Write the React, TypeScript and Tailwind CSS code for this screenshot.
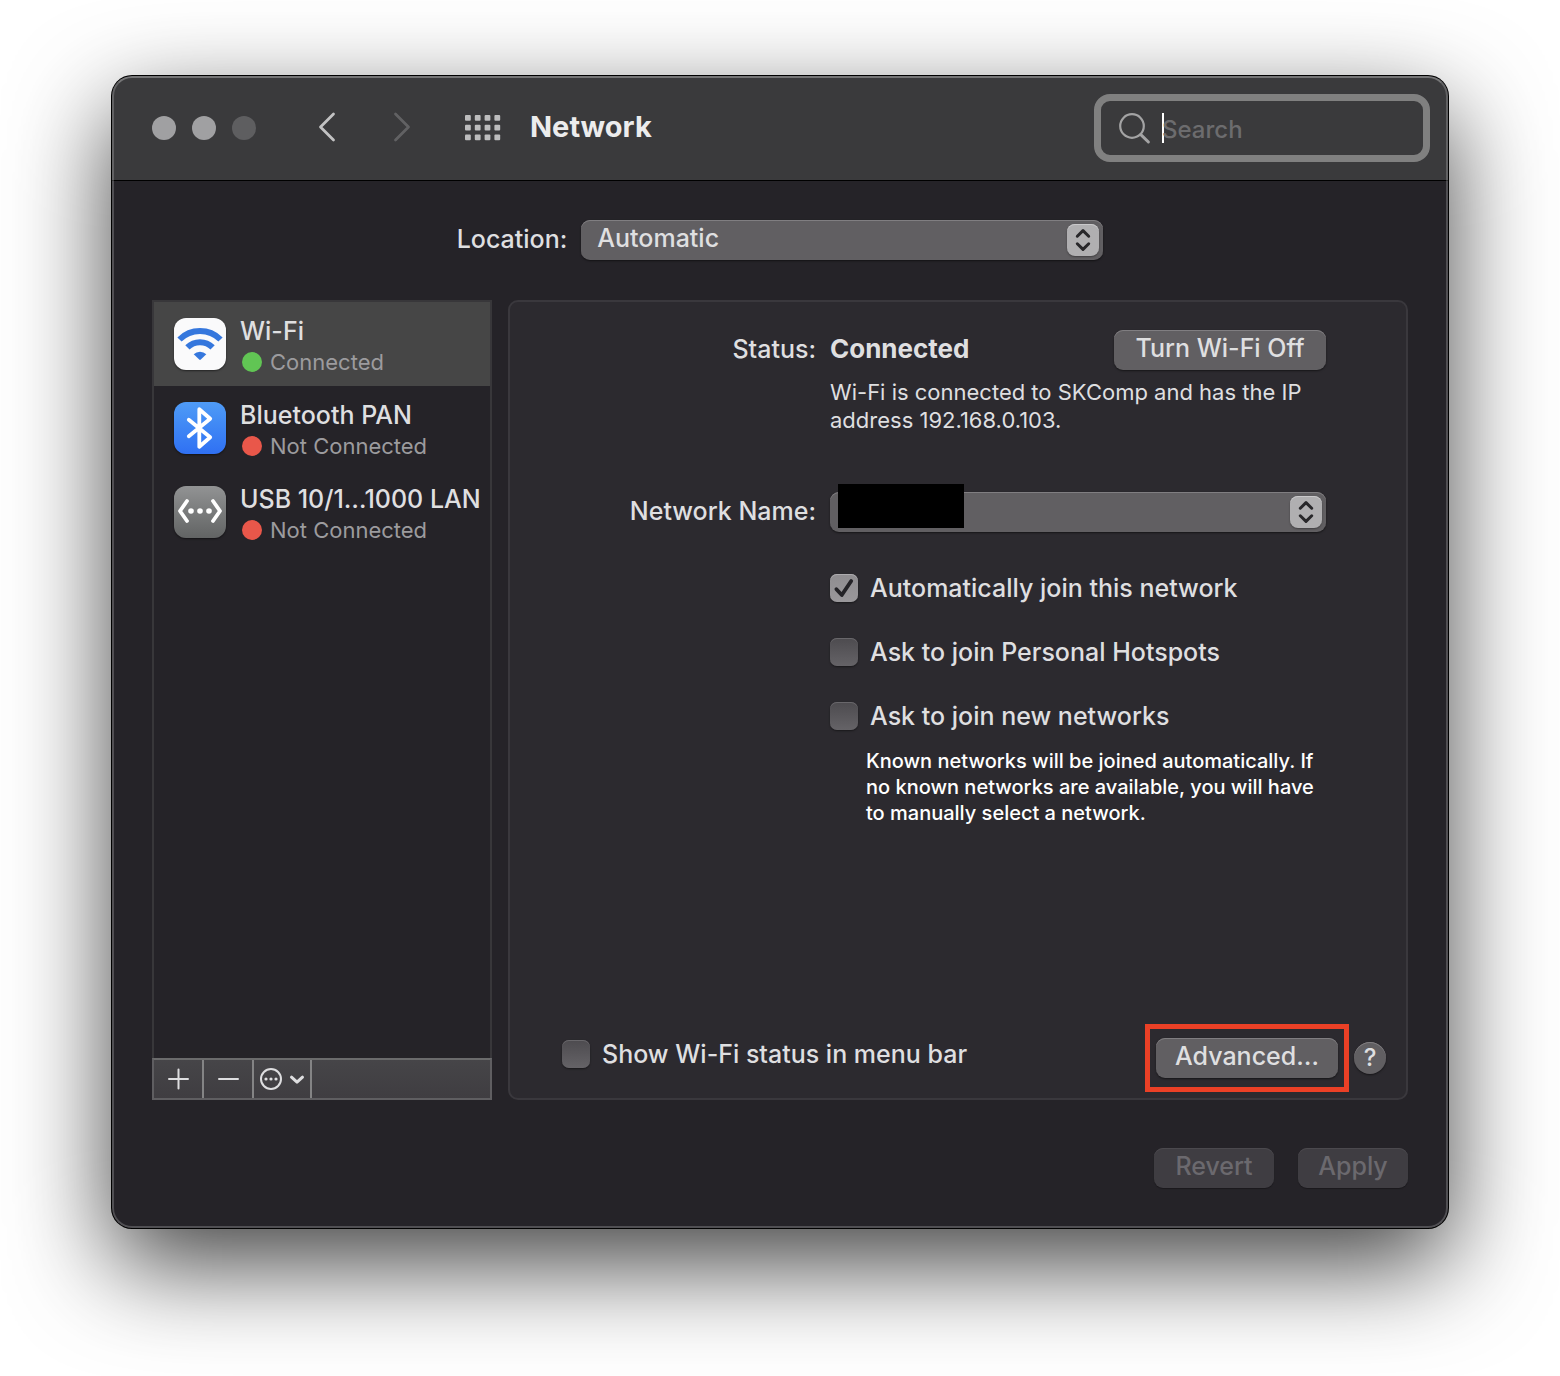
import { useState, type ReactNode } from 'react';

const textStroke = '#dedee0';

function WifiIcon() {
  return (
    <svg viewBox="0 0 52 52" className="h-full w-full" fill="none" stroke="#3577dd" strokeWidth="6" aria-hidden="true">
      <path d="M5.5 21.5A29 29 0 0 1 46.5 21.5" />
      <path d="M13.4 29.4A17.8 17.8 0 0 1 38.6 29.4" />
      <path d="M19.7 36.3A9 9 0 0 1 32.3 36.3L26.8 41.6Q26 42.3 25.2 41.6Z" fill="#3577dd" stroke="none" />
    </svg>
  );
}

function BluetoothIcon() {
  return (
    <svg viewBox="0 0 52 52" className="h-full w-full" fill="none" stroke="#fff" strokeWidth="3.8" strokeLinecap="round" strokeLinejoin="round" aria-hidden="true">
      <path d="M14.8 17.8L36.2 35.2L25.3 44.8V7.2L36.2 16.8L14.8 34.2" />
    </svg>
  );
}

function UsbIcon() {
  return (
    <svg viewBox="0 0 52 52" className="h-full w-full" fill="none" stroke="#fff" strokeWidth="3.8" strokeLinecap="round" strokeLinejoin="round" aria-hidden="true">
      <path d="M13 15L6 25L13 35M39 15L46 25L39 35" />
      <g fill="#fff" stroke="none">
        <circle cx="17" cy="25" r="2.8" />
        <circle cx="26" cy="25" r="2.8" />
        <circle cx="35" cy="25" r="2.8" />
      </g>
    </svg>
  );
}

const services = [
  { name: 'Wi-Fi', status: 'Connected', dot: 'bg-[#61c554]', tile: 'bg-[#fafafb]', icon: <WifiIcon /> },
  { name: 'Bluetooth PAN', status: 'Not Connected', dot: 'bg-[#e9574a]', tile: 'bg-linear-to-b from-[#4f9bf6] to-[#3070f3]', icon: <BluetoothIcon /> },
  { name: 'USB 10/1…1000 LAN', status: 'Not Connected', dot: 'bg-[#e9574a]', tile: 'bg-linear-to-b from-[#929394] to-[#626464]', icon: <UsbIcon /> },
];

function PopUp({ id, options, children }: { id: string; options: string[]; children?: ReactNode }) {
  return (
    <div className="relative">
      <select
        id={id}
        className="block h-10 w-full appearance-none rounded-[9px] bg-[#615f62] pr-12 pb-0.5 pl-4 shadow-[inset_0_1px_0_#807e81,0_1px_2px_rgba(0,0,0,0.5)] outline-none"
      >
        {options.map((o) => (
          <option key={o}>{o}</option>
        ))}
      </select>
      <span className="pointer-events-none absolute top-1 right-1 size-8 rounded-lg bg-[#b0afb1] shadow-[inset_0_1px_0_#cac9cb,0_1px_2px_rgba(0,0,0,0.35)]">
        <svg viewBox="0 0 32 32" fill="none" stroke="#28272a" strokeWidth="3" strokeLinecap="round" strokeLinejoin="round" aria-hidden="true">
          <path d="M10.3 12.2L16 6.6L21.7 12.2M10.3 19.8L16 25.4L21.7 19.8" />
        </svg>
      </span>
      {children}
    </div>
  );
}

function Check({ label, defaultChecked = false }: { label: string; defaultChecked?: boolean }) {
  return (
    <label className="flex h-8 items-center gap-3">
      <span className="relative size-7 shrink-0">
        <input
          type="checkbox"
          defaultChecked={defaultChecked}
          className="peer block size-7 appearance-none rounded-[7px] bg-linear-to-b from-[#4d4b4f] to-[#656367] shadow-[inset_0_1px_0_#69676b,0_1px_2px_rgba(0,0,0,0.45)] outline-none checked:from-[#8f8d90] checked:to-[#9a989b] checked:shadow-[inset_0_1px_0_#adabae,0_1px_2px_rgba(0,0,0,0.45)]"
        />
        <svg viewBox="0 0 28 28" className="pointer-events-none absolute inset-0 hidden peer-checked:block" fill="none" stroke="#242327" strokeWidth="3.8" strokeLinecap="round" strokeLinejoin="round" aria-hidden="true">
          <path d="M6.4 15.2L11.8 21L21.2 7" />
        </svg>
      </span>
      <span className="pt-0.5 whitespace-nowrap">{label}</span>
    </label>
  );
}

function PushButton({ children, disabled = false, className = '' }: { children: ReactNode; disabled?: boolean; className?: string }) {
  return (
    <button
      type="button"
      disabled={disabled}
      className={`h-10 rounded-[9px] bg-[#615f62] pb-0.5 text-center whitespace-nowrap shadow-[inset_0_1px_0_#807e81,0_1px_2px_rgba(0,0,0,0.5)] disabled:bg-[#3f3d42] disabled:text-[#6b696e] disabled:shadow-[inset_0_1px_0_#4b494e,0_1px_1px_rgba(0,0,0,0.3)] ${className}`}
    >
      {children}
    </button>
  );
}

function TitleBar() {
  return (
    <header className="flex h-[105px] items-center border-b border-black bg-[#3a3a3c] pr-[18px] pl-10">
      <div className="flex gap-4">
        <button type="button" aria-label="Close" className="size-6 rounded-full bg-[#a0a0a2]" />
        <button type="button" aria-label="Minimize" className="size-6 rounded-full bg-[#a0a0a2]" />
        <button type="button" aria-label="Zoom" disabled className="size-6 rounded-full bg-[#5e5e60]" />
      </div>
      <div className="ml-[55px] flex gap-[42px]">
        <button type="button" aria-label="Back">
          <svg viewBox="0 0 32 32" className="size-8" fill="none" stroke="#c2c2c3" strokeWidth="2.8" strokeLinecap="round" strokeLinejoin="round" aria-hidden="true">
            <path d="M22.5 2L9.5 15L22.5 28" />
          </svg>
        </button>
        <button type="button" aria-label="Forward" disabled>
          <svg viewBox="0 0 32 32" className="size-8" fill="none" stroke="#616163" strokeWidth="2.8" strokeLinecap="round" strokeLinejoin="round" aria-hidden="true">
            <path d="M10.5 2L23.5 15L10.5 28" />
          </svg>
        </button>
      </div>
      <button type="button" aria-label="Show All" className="ml-12">
        <svg viewBox="0 0 36 26" className="h-[26px] w-9" fill="#bcbcbd" aria-hidden="true">
          {[0, 9.7, 19.4].map((y) =>
            [0, 9.8, 19.6, 29.4].map((x) => <rect key={`${x}-${y}`} x={x} y={y} width="5.8" height="5.8" rx="1" />),
          )}
        </svg>
      </button>
      <h1 className="ml-[29px] pb-0.5 text-[29px] font-bold text-[#ececed]">Network</h1>
      <label className="relative ml-auto flex h-[68px] w-[336px] items-center rounded-2xl border-[7px] border-[#808080] pl-4">
        <svg viewBox="0 0 34 34" className="size-[34px] shrink-0" fill="none" stroke="#a3a3a4" strokeLinecap="round" aria-hidden="true">
          <circle cx="15" cy="15" r="11.8" strokeWidth="2.2" />
          <path d="M23.8 23.6L31.4 31" strokeWidth="3" />
        </svg>
        <span className="ml-[11px] h-[30px] w-0.5 shrink-0 bg-white" />
        <input
          type="search"
          aria-label="Search"
          placeholder="Search"
          className="-ml-0.5 w-full min-w-0 flex-1 bg-transparent pt-1 text-[24px] caret-transparent outline-none placeholder:text-[#6c6c6e]"
        />
      </label>
    </header>
  );
}

function Sidebar() {
  const [selected, setSelected] = useState(0);
  return (
    <aside className="flex w-[340px] shrink-0 flex-col">
      <ul className="flex-1 border-2 border-b-0 border-[#38373a]">
        {services.map((s, i) => (
          <li key={s.name}>
            <button
              type="button"
              aria-pressed={selected === i}
              onClick={() => setSelected(i)}
              className="flex h-[84px] w-full items-start gap-3.5 pl-5 text-left aria-pressed:bg-[#464646]"
            >
              <span className={`mt-4 size-[52px] shrink-0 rounded-xl shadow-[0_1px_2px_rgba(0,0,0,0.5)] ${s.tile}`}>{s.icon}</span>
              <span className="mt-[13px] flex flex-col whitespace-nowrap">
                <span className="leading-8">{s.name}</span>
                <span className="flex items-center gap-2 text-[22px] leading-[30px] font-normal text-[#9c9b9e]">
                  <span className={`ml-0.5 size-5 rounded-full ${s.dot}`} />
                  {s.status}
                </span>
              </span>
            </button>
          </li>
        ))}
      </ul>
      <div className="flex h-[42px] divide-x-2 divide-[#848485] border-2 border-[#5f5e61] border-t-[#6b6b6c] bg-linear-to-b from-[#464548] to-[#3f3d41]">
        <button type="button" aria-label="Add service" className="flex w-[50px] items-center justify-center">
          <svg viewBox="0 0 22 22" className="size-[22px]" stroke={textStroke} strokeWidth="2" strokeLinecap="round" aria-hidden="true">
            <path d="M11.5 1.5V20.5M2 11H21" />
          </svg>
        </button>
        <button type="button" aria-label="Remove service" className="flex w-[50px] items-center justify-center">
          <svg viewBox="0 0 22 22" className="size-[22px]" stroke={textStroke} strokeWidth="2" strokeLinecap="round" aria-hidden="true">
            <path d="M2 11H21" />
          </svg>
        </button>
        <button type="button" aria-label="More actions" className="flex w-[58px] items-center justify-center">
          <svg viewBox="0 0 46 24" className="h-6 w-[46px]" fill="none" stroke={textStroke} strokeLinecap="round" strokeLinejoin="round" aria-hidden="true">
            <circle cx="12" cy="12" r="10" strokeWidth="2" />
            <g fill={textStroke} stroke="none">
              <circle cx="7" cy="12" r="1.6" />
              <circle cx="12" cy="12" r="1.6" />
              <circle cx="17" cy="12" r="1.6" />
            </g>
            <path d="M32.5 10.2L38 15.2L43.5 10.2" strokeWidth="3" />
          </svg>
        </button>
        <span />
      </div>
    </aside>
  );
}

function WifiPanel() {
  return (
    <section className="flex min-w-0 flex-1 flex-col rounded-[10px] border-2 border-[#3a383d] bg-[#2c2a2f]">
      <div className="grid grid-cols-[306px_1fr] gap-x-3.5 pt-7 pr-20">
        <span className="text-right leading-[38px]">Status:</span>
        <div>
          <div className="flex justify-between">
            <strong className="text-[26px] leading-[38px] font-bold">Connected</strong>
            <PushButton className="w-[212px]">Turn Wi-Fi Off</PushButton>
          </div>
          <p className="mt-2 text-[22px] leading-7 font-normal whitespace-nowrap">
            Wi-Fi is connected to SKComp and has the IP
            <br />
            address 192.168.0.103.
          </p>
        </div>
        <label htmlFor="network" className="mt-[58px] text-right leading-[38px]">
          Network Name:
        </label>
        <div className="mt-[58px]">
          <PopUp id="network" options={['']}>
            <span className="absolute -top-2 left-2 h-11 w-[126px] bg-black" />
          </PopUp>
        </div>
        <div className="col-start-2 mt-10 flex flex-col gap-8">
          <Check label="Automatically join this network" defaultChecked />
          <Check label="Ask to join Personal Hotspots" />
          <Check label="Ask to join new networks" />
        </div>
        <p className="col-start-2 mt-4 pl-9 text-[20px] leading-[26px] whitespace-nowrap text-white">
          Known networks will be joined automatically. If
          <br />
          no known networks are available, you will have
          <br />
          to manually select a network.
        </p>
      </div>
      <div className="mt-auto flex items-start justify-between pr-5 pb-1.5 pl-[52px]">
        <div className="mt-3.5">
          <Check label="Show Wi-Fi status in menu bar" />
        </div>
        <div className="flex items-center gap-[5px]">
          <div className="flex h-[68px] w-[204px] items-center justify-center border-[5px] border-[#eb4026]">
            <PushButton className="w-[182px]">Advanced…</PushButton>
          </div>
          <button
            type="button"
            aria-label="Help"
            className="size-8 rounded-full bg-[#615f62] text-[24px] leading-8 shadow-[inset_0_1px_0_#807e81,0_1px_2px_rgba(0,0,0,0.5)]"
          >
            ?
          </button>
        </div>
      </div>
    </section>
  );
}

export default function App() {
  return (
    <div className="min-h-screen overflow-hidden bg-white px-28 pt-[76px] pb-[148px] font-['Inter','Liberation_Sans',sans-serif] text-[25px] font-medium text-[#dfdfe0]">
      <main className="relative overflow-clip rounded-[20px] bg-[#252328] shadow-[0_0_0_1px_#000,0_36px_100px_rgba(0,0,0,0.75)]">
        <TitleBar />
        <div className="flex flex-col px-10 pt-[39px] pb-10">
          <div className="flex justify-center gap-3.5">
            <label htmlFor="location" className="leading-[38px]">
              Location:
            </label>
            <div className="w-[522px]">
              <PopUp id="location" options={['Automatic']} />
            </div>
          </div>
          <div className="mt-10 flex min-h-[800px] gap-4">
            <Sidebar />
            <WifiPanel />
          </div>
          <div className="mt-12 flex justify-end gap-6">
            <PushButton disabled className="w-[120px]">
              Revert
            </PushButton>
            <PushButton disabled className="w-[110px]">
              Apply
            </PushButton>
          </div>
        </div>
        <div className="pointer-events-none absolute inset-0 rounded-[20px] border-2 border-white/20 border-t-white/30" />
      </main>
    </div>
  );
}
